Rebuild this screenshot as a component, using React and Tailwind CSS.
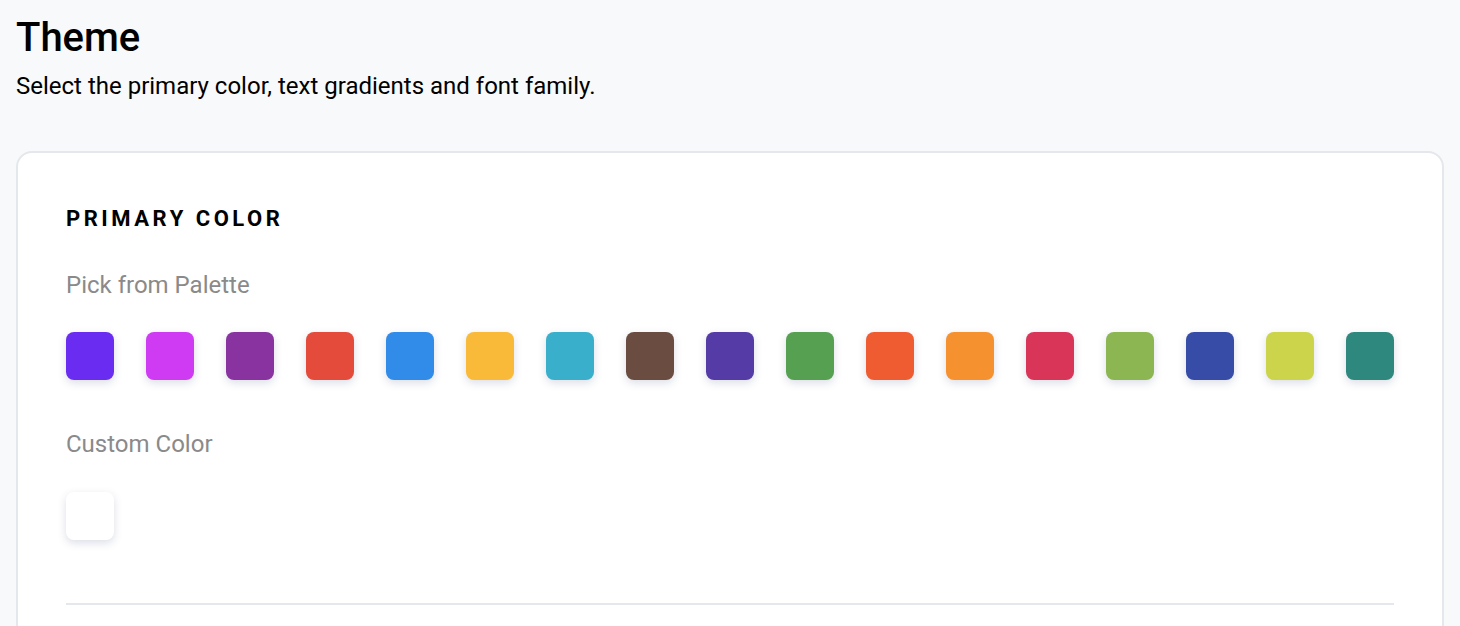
const palette = [
  '#6a2cf0', '#cf3bf2', '#88339f', '#e44b3a', '#318be8', '#f8ba38', '#39afcb', '#6a4c40', '#543ba6',
  '#56a052', '#f05c31', '#f6912f', '#d93558', '#8bb652', '#364ca7', '#cbd44b', '#2f887d',
];

const Swatch = ({ color }) => (
  <button
    type="button"
    className="w-12 h-12 rounded-lg shadow-[0_3px_8px_rgba(60,70,120,0.18)] shrink-0"
    style={{ background: color }}
  />
);

export default function App() {
  return (
    <div className="min-h-screen bg-[#f8f9fb] px-4 pt-[14px] font-['Roboto',sans-serif] text-black">
      <h1 className="text-[40px] leading-[48px] font-medium">Theme</h1>
      <p className="text-[24px] leading-8 mt-2">Select the primary color, text gradients and font family.</p>

      <div className="mt-[49px] bg-white border-2 border-[#e4e7eb] rounded-2xl px-12 pt-[52px] pb-12">
        <h2 className="text-[22px] font-bold tracking-[0.16em] leading-7">PRIMARY COLOR</h2>

        <div className="mt-9 text-[24px] leading-8 text-[#8a8a8a]">Pick from Palette</div>
        <div className="mt-[31px] flex justify-between">
          {palette.map((c) => (
            <Swatch key={c} color={c} />
          ))}
        </div>

        <div className="mt-12 text-[24px] leading-8 text-[#8a8a8a]">Custom Color</div>
        <div className="mt-8 flex">
          <Swatch color="#ffffff" />
        </div>

        <hr className="mt-[63px] border-0 h-[2px] bg-[#e4e7eb]" />
      </div>
    </div>
  );
}
